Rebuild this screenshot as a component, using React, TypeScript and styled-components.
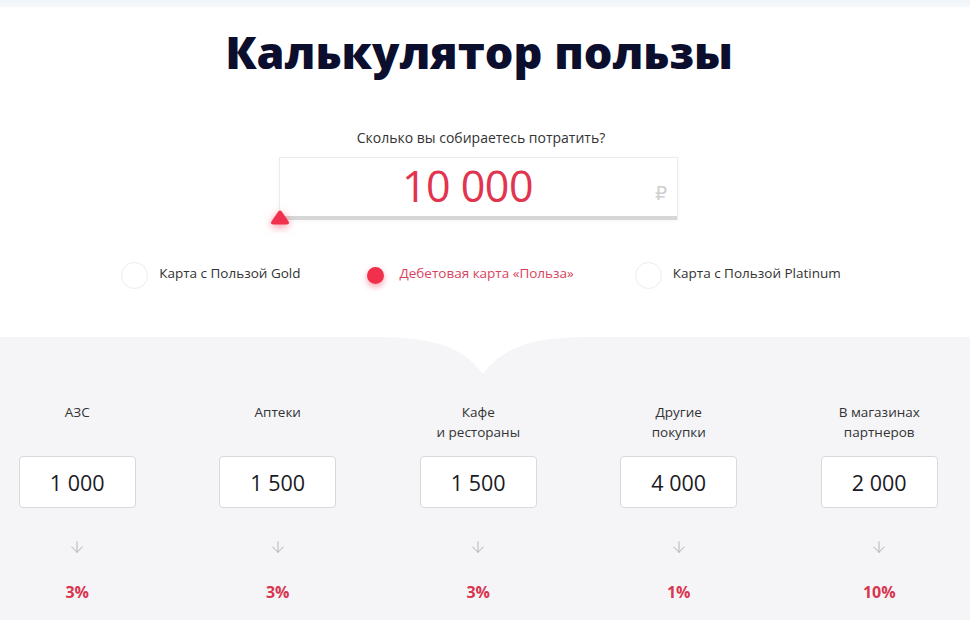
import React from "react";
import styled, { createGlobalStyle } from "styled-components";
import { ArrowDown } from "lucide-react";

const Global = createGlobalStyle`
  html, body { margin: 0; padding: 0; background: #fff; }
  body { font-family: "Open Sans", "Noto Sans", sans-serif; color: #333; overflow: hidden; }
  * { box-sizing: border-box; }
`;

const Page = styled.div`
  width: 970px;
  height: 620px;
  display: flex;
  flex-direction: column;
  overflow: hidden;
`;

const TopStrip = styled.div`
  height: 7px;
  background: linear-gradient(#eff5f9, #f6f9fb);
`;

const Title = styled.h1`
  margin: 17px 0 0;
  padding-right: 12px;
  font-size: 45px;
  line-height: 55px;
  font-weight: 800;
  text-align: center;
  color: #0b0e2c;
`;

const Question = styled.div`
  margin-top: 49px;
  padding-right: 8px;
  font-size: 14px;
  line-height: 20px;
  text-align: center;
  color: #333;
`;

const AmountWrap = styled.div`
  display: flex;
  justify-content: center;
  margin-top: 9px;
  padding-right: 13px;
`;

const AmountBox = styled.div`
  position: relative;
  width: 399px;
  height: 63px;
  background: #fff;
  border: 1px solid #ececec;
  border-bottom: none;
  box-shadow: 0 1px 4px rgba(0, 0, 0, 0.04);
  display: flex;
  align-items: center;
  justify-content: center;
  padding-bottom: 8px;
`;

const AmountValue = styled.span`
  font-size: 43px;
  font-weight: 400;
  color: #e1344f;
  letter-spacing: -0.5px;
  margin-left: -22px;
`;

const Ruble = styled.span`
  position: absolute;
  right: 10px;
  top: 24px;
  font-family: "DejaVu Sans", sans-serif;
  font-size: 19px;
  color: #cfcfcf;
`;

const Track = styled.div`
  position: absolute;
  left: 0;
  right: 0;
  bottom: 0;
  height: 4px;
  background: #d6d6d6;
`;

const Thumb = styled.svg`
  position: absolute;
  left: -10px;
  bottom: -6px;
  width: 20px;
  height: 16px;
  filter: drop-shadow(0 2px 4px rgba(240, 40, 70, 0.55));
  overflow: visible;
`;

const Options = styled.div`
  margin-top: 42px;
  display: flex;
  justify-content: center;
  gap: 61px;
  padding-right: 8px;
`;

const Option = styled.div`
  display: flex;
  align-items: center;
  gap: 11px;
`;

const Circle = styled.span<{ $active?: boolean }>`
  width: 27px;
  height: 27px;
  border-radius: 50%;
  border: 1px solid #ededed;
  background: #fff;
  display: flex;
  align-items: center;
  justify-content: center;
  ${(p) => (p.$active ? "border-color: transparent;" : "")}
`;

const Dot = styled.span`
  width: 17px;
  height: 17px;
  border-radius: 50%;
  background: #f0304d;
  box-shadow: 0 3px 6px rgba(240, 48, 77, 0.45);
`;

const OptionLabel = styled.span<{ $active?: boolean }>`
  font-size: 13.5px;
  line-height: 20px;
  margin-top: -5px;
  color: ${(p) => (p.$active ? "#d8435d" : "#333")};
`;

const Gray = styled.section`
  position: relative;
  margin-top: 48px;
  flex: 1;
  background: #f5f5f8;
  padding-top: 65px;
  overflow: hidden;
`;

const Notch = styled.svg`
  position: absolute;
  top: 0;
  left: 368px;
  width: 230px;
  height: 40px;
`;

const Columns = styled.div`
  display: grid;
  grid-template-columns: repeat(5, 200.5px);
  width: 1003px;
  margin-left: -23px;
`;

const Column = styled.div`
  display: flex;
  flex-direction: column;
  align-items: center;
`;

const ColLabel = styled.div`
  height: 40px;
  font-size: 13.5px;
  line-height: 20px;
  text-align: center;
  color: #333;
`;

const ValueBox = styled.div`
  margin-top: 14px;
  width: 117px;
  height: 52px;
  background: #fff;
  border: 1px solid #d9d9dd;
  border-radius: 4px;
  display: flex;
  align-items: center;
  justify-content: center;
  font-size: 21.5px;
  color: #1a1a24;
`;

const Arrow = styled.div`
  margin-top: 30px;
  height: 18px;
  display: flex;
  color: #b8b8bc;
`;

const Percent = styled.div`
  margin-top: 26px;
  font-size: 16px;
  line-height: 20px;
  font-weight: 700;
  color: #d9354f;
`;

const categories = [
  { label: ["АЗС"], value: "1 000", pct: "3%" },
  { label: ["Аптеки"], value: "1 500", pct: "3%" },
  { label: ["Кафе", "и рестораны"], value: "1 500", pct: "3%" },
  { label: ["Другие", "покупки"], value: "4 000", pct: "1%" },
  { label: ["В магазинах", "партнеров"], value: "2 000", pct: "10%" },
];

const options = [
  { label: "Карта с Пользой Gold", active: false },
  { label: "Дебетовая карта «Польза»", active: true },
  { label: "Карта с Пользой Platinum", active: false },
];

export default function App() {
  return (
    <>
      <Global />
      <Page>
        <TopStrip />
        <Title>Калькулятор пользы</Title>
        <Question>Сколько вы собираетесь потратить?</Question>
        <AmountWrap>
          <AmountBox>
            <AmountValue>10 000</AmountValue>
            <Ruble>₽</Ruble>
            <Track />
            <Thumb viewBox="0 0 20 16">
              <path
                d="M8.3 1.6 Q10 -0.6 11.7 1.6 L18.6 11.6 Q20 14.5 16.8 14.5 L3.2 14.5 Q0 14.5 1.4 11.6 Z"
                fill="#f0304d"
              />
            </Thumb>
          </AmountBox>
        </AmountWrap>
        <Options>
          {options.map((o) => (
            <Option key={o.label}>
              <Circle $active={o.active}>{o.active && <Dot />}</Circle>
              <OptionLabel $active={o.active}>{o.label}</OptionLabel>
            </Option>
          ))}
        </Options>
        <Gray>
          <Notch viewBox="0 0 230 40">
            <path
              d="M0 0 C55 0 90 4 115 37 C140 4 175 0 230 0 Z"
              fill="#ffffff"
            />
          </Notch>
          <Columns>
            {categories.map((c) => (
              <Column key={c.label.join(" ")}>
                <ColLabel>
                  {c.label.map((l) => (
                    <div key={l}>{l}</div>
                  ))}
                </ColLabel>
                <ValueBox>{c.value}</ValueBox>
                <Arrow>
                  <ArrowDown size={18} strokeWidth={1.4} />
                </Arrow>
                <Percent>{c.pct}</Percent>
              </Column>
            ))}
          </Columns>
        </Gray>
      </Page>
    </>
  );
}
